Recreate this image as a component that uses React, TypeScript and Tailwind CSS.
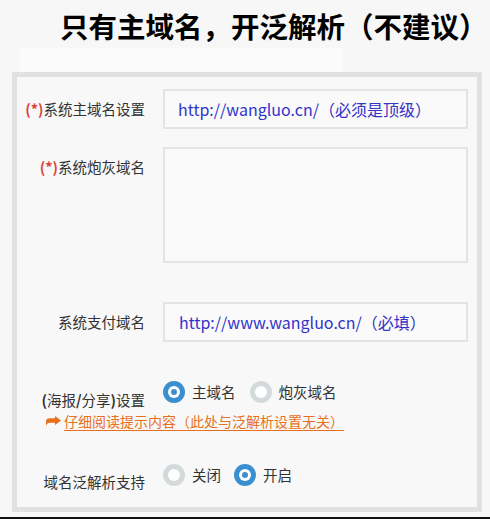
const font = { fontFamily: '"Noto Sans CJK SC", "Noto Sans", sans-serif' };

function Radio({ checked, label }: { checked: boolean; label: string }) {
  return (
    <label className="flex items-center gap-[7px]">
      <span
        className={`flex h-[22px] w-[22px] items-center justify-center rounded-full ${checked ? "bg-[#3a8fd1]" : "bg-[#d4d9dc]"}`}
      >
        <span className="flex h-[12px] w-[12px] items-center justify-center rounded-full bg-white">
          {checked && <span className="h-[6px] w-[6px] rounded-full bg-[#3a8fd1]"></span>}
        </span>
      </span>
      <span className="text-[14.5px] leading-[20px] text-[#333]">{label}</span>
    </label>
  );
}

function Required() {
  return <span className="font-bold text-[#d9453b]">(*)</span>;
}

function ShareArrow() {
  return (
    <svg width="15" height="10" viewBox="0 0 15 10" className="fill-current">
      <path d="M15 4.5 L9 0 V2.3 H3.5 Q0 2.3 0 6 V10 Q1 6.8 4.5 6.8 H9 V9 Z" />
    </svg>
  );
}

export default function App() {
  return (
    <div className="flex h-[519px] w-[490px] flex-col bg-[#f7f7f7]" style={font}>
      <div className="h-[48px] pl-[60px] pt-[12px]">
        <h1 className="text-[28.5px] font-bold leading-[28px] text-black">只有主域名，开泛解析（不建议）</h1>
      </div>
      <div className="ml-[20px] h-[24px] w-[323px] bg-[#fbfbfb]"></div>

      <div className="ml-[12px] h-[440px] w-[470px] border-[5px] border-[#e1e1e1] bg-[#f8f8f8] pt-[12px]">
        <div className="flex items-center">
          <div className="w-[128px] text-right text-[14.5px] leading-[20px] text-[#333]">
            <Required />系统主域名设置
          </div>
          <div className="ml-[18px] flex h-[40px] w-[305px] items-center border-2 border-[#e4e4e4] bg-[#fafafa] px-[13px] text-[16px] text-[#3333c8]">
            http://wangluo.cn/（必须是顶级）
          </div>
        </div>

        <div className="mt-[18px] flex items-start">
          <div className="mt-[10px] w-[128px] text-right text-[14.5px] leading-[20px] text-[#333]">
            <Required />系统炮灰域名
          </div>
          <div className="ml-[18px] h-[116px] w-[305px] border-2 border-[#e4e4e4] bg-[#fafafa]"></div>
        </div>

        <div className="mt-[39px] flex items-center">
          <div className="w-[128px] text-right text-[14.5px] leading-[20px] text-[#333]">系统支付域名</div>
          <div className="ml-[18px] flex h-[40px] w-[305px] items-center border-2 border-[#e4e4e4] bg-[#fafafa] px-[14px] text-[16px] text-[#3333c8]">
            http://www.wangluo.cn/（必填）
          </div>
        </div>

        <div className="mt-[39px] flex items-start">
          <div className="mt-[9px] w-[128px] text-right text-[14.5px] leading-[20px] text-[#333]">
            <span className="font-bold">(</span>海报<span className="font-bold">/</span>分享<span className="font-bold">)</span>设置
          </div>
          <div className="ml-[18px] flex h-[22px] items-center gap-[14px]">
            <Radio checked label="主域名" />
            <Radio checked={false} label="炮灰域名" />
          </div>
        </div>

        <div className="mt-[2px] flex items-center gap-[3px] pl-[29px] text-[14px] leading-[18px] text-[#e8701c]">
          <ShareArrow />
          <span className="underline underline-offset-[3px]">仔细阅读提示内容（此处与泛解析设置无关）</span>
        </div>

        <div className="mt-[34px] flex items-start">
          <div className="mt-[8px] w-[128px] text-right text-[14.5px] leading-[20px] text-[#333]">域名泛解析支持</div>
          <div className="ml-[18px] flex h-[22px] items-center gap-[13px]">
            <Radio checked={false} label="关闭" />
            <Radio checked label="开启" />
          </div>
        </div>
      </div>

      <div className="mt-auto h-[2px] w-full bg-[#111]"></div>
    </div>
  );
}
